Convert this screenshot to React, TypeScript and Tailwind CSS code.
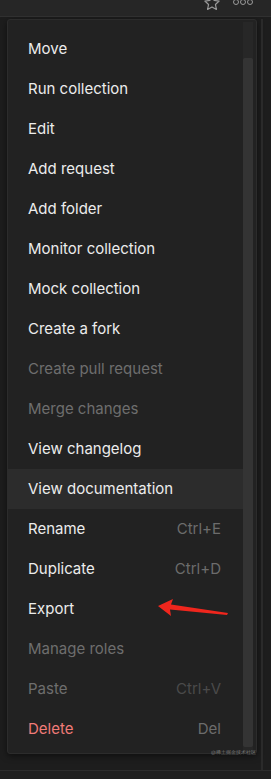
import React from "react";

type Item = {
  label: string;
  shortcut?: string;
  disabled?: boolean;
  danger?: boolean;
  active?: boolean;
};

const items: Item[] = [
  { label: "Move" },
  { label: "Run collection" },
  { label: "Edit" },
  { label: "Add request" },
  { label: "Add folder" },
  { label: "Monitor collection" },
  { label: "Mock collection" },
  { label: "Create a fork" },
  { label: "Create pull request", disabled: true },
  { label: "Merge changes", disabled: true },
  { label: "View changelog" },
  { label: "View documentation", active: true },
  { label: "Rename", shortcut: "Ctrl+E" },
  { label: "Duplicate", shortcut: "Ctrl+D" },
  { label: "Export" },
  { label: "Manage roles", disabled: true },
  { label: "Paste", shortcut: "Ctrl+V", disabled: true },
  { label: "Delete", shortcut: "Del", danger: true },
];

const App = () => {
  return (
    <div
      className="relative h-[779px] w-[271px] overflow-hidden bg-[#1d1d1d]"
      style={{ fontFamily: "Inter, 'Noto Sans', sans-serif" }}
    >
      {/* top bar */}
      <div className="relative h-[17px] border-b border-[#303030] bg-[#262626]">
        <svg
          className="absolute left-[203px] top-[-6px]"
          width="18"
          height="18"
          viewBox="0 0 24 24"
          fill="none"
          stroke="#9a9a9a"
          strokeWidth="1.6"
          strokeLinejoin="round"
        >
          <path d="M12 2.5l2.9 6.1 6.6.8-4.9 4.6 1.3 6.6L12 17.3l-5.9 3.3 1.3-6.6-4.9-4.6 6.6-.8z" />
        </svg>
        <div className="absolute left-[233px] top-[-1px] flex gap-[1px]">
          <span className="h-[6px] w-[6px] rounded-full border border-[#9a9a9a]" />
          <span className="h-[6px] w-[6px] rounded-full border border-[#9a9a9a]" />
          <span className="h-[6px] w-[6px] rounded-full border border-[#9a9a9a]" />
        </div>
      </div>

      <div className="flex">
        {/* menu panel */}
        <div className="ml-[7px] mt-[2px] flex h-[735px] w-[250px] rounded-[3px] border border-[#2c2c2c] bg-[#222222] shadow-[0_2px_6px_rgba(0,0,0,0.5)]">
          <div className="flex flex-1 flex-col pt-[9px]">
            {items.map((item) => (
              <div
                key={item.label}
                className={`flex h-[40px] items-center justify-between pl-[20px] pr-[22px] text-[15px] ${
                  item.active ? "bg-[#2c2c2c]" : ""
                }`}
              >
                <span
                  className={
                    item.danger
                      ? "text-[#f07b78]"
                      : item.disabled
                      ? "text-[#6e6e6e]"
                      : "text-[#ececec]"
                  }
                >
                  {item.label}
                </span>
                {item.shortcut && (
                  <span
                    className={
                      item.label === "Paste"
                        ? "text-[#4a4a4a]"
                        : "text-[#6c6c6c]"
                    }
                  >
                    {item.shortcut}
                  </span>
                )}
              </div>
            ))}
          </div>
          {/* scrollbar */}
          <div className="mr-[3px] mt-[2px] flex w-[10px] flex-col bg-[#272727]">
            <div className="mt-[36px] mb-[6px] flex-1 rounded-[2px] bg-[#343434]" />
          </div>
        </div>
        <div className="ml-[4px] mt-[2px] h-[760px] w-[2px] bg-[#2a2a2a]" />
      </div>

      {/* watermark */}
      <div className="absolute left-[211px] top-[749px] text-[5px] text-[#7a7a7a]">
        @稀土掘金技术社区
      </div>
      <div className="absolute left-0 top-[770px] h-[9px] w-full border-t border-[#2c2c2c] bg-[#1f1f1f]" />

      {/* red arrow */}
      <svg
        className="absolute left-[155px] top-[598px]"
        width="76"
        height="22"
        viewBox="0 0 76 22"
      >
        <path d="M3 8 L18 1 L16 6.5 L73 15 L72 17 L15 11.5 L16 18 Z" fill="#f0261d" />
      </svg>
    </div>
  );
};

export default App;
